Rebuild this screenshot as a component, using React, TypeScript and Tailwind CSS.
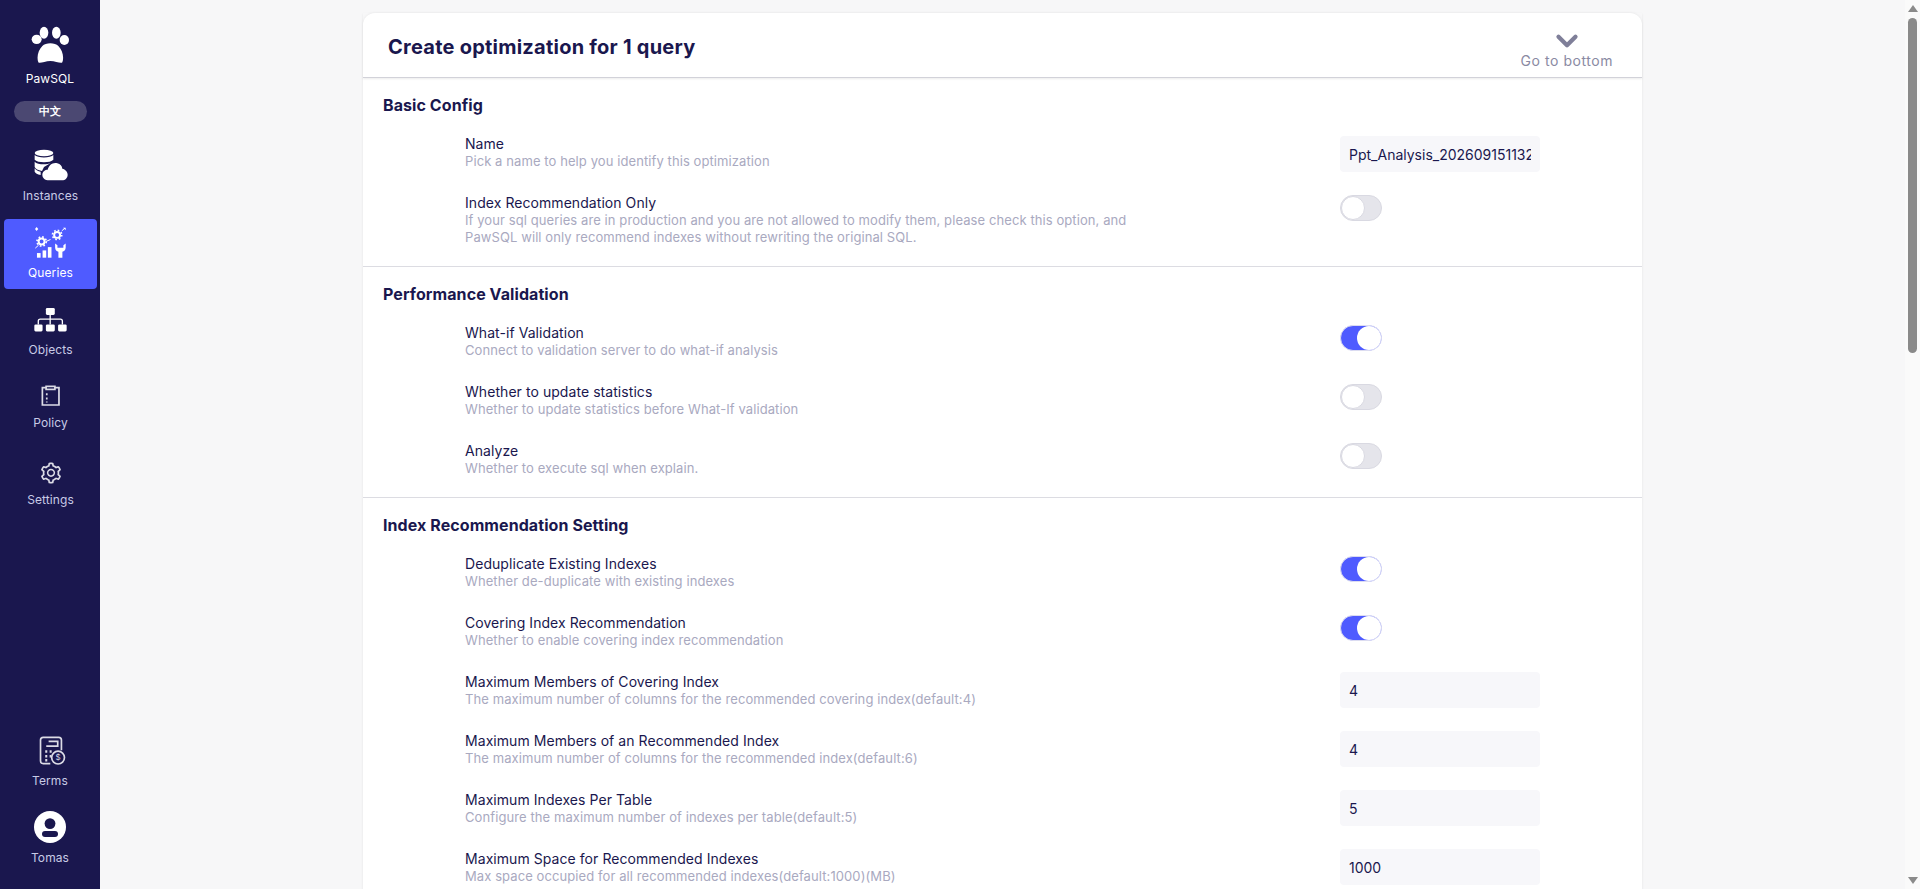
import { ChevronDown } from "lucide-react";
import { AiOutlineSetting } from "react-icons/ai";

type Row = {
  label: string;
  desc: string[];
  toggle?: boolean;
  value?: string;
  inputClass?: string;
};

const SECTIONS: { title: string; rows: Row[]; pb: string }[] = [
  {
    title: "Basic Config",
    pb: "pb-[20px]",
    rows: [
      { label: "Name", desc: ["Pick a name to help you identify this optimization"], value: "Ppt_Analysis_20260915113245", inputClass: "mt-[1px]" },
      {
        label: "Index Recommendation Only",
        desc: [
          "If your sql queries are in production and you are not allowed to modify them, please check this option, and",
          "PawSQL will only recommend indexes without rewriting the original SQL.",
        ],
        toggle: false,
      },
    ],
  },
  {
    title: "Performance Validation",
    pb: "pb-[17px]",
    rows: [
      { label: "What-if Validation", desc: ["Connect to validation server to do what-if analysis"], toggle: true },
      { label: "Whether to update statistics", desc: ["Whether to update statistics before What-If validation"], toggle: false },
      { label: "Analyze", desc: ["Whether to execute sql when explain."], toggle: false },
    ],
  },
  {
    title: "Index Recommendation Setting",
    pb: "pb-[18px]",
    rows: [
      { label: "Deduplicate Existing Indexes", desc: ["Whether de-duplicate with existing indexes"], toggle: true },
      { label: "Covering Index Recommendation", desc: ["Whether to enable covering index recommendation"], toggle: true },
      { label: "Maximum Members of Covering Index", desc: ["The maximum number of columns for the recommended covering index(default:4)"], value: "4", inputClass: "-mt-[1px]" },
      { label: "Maximum Members of an Recommended Index", desc: ["The maximum number of columns for the recommended index(default:6)"], value: "4", inputClass: "-mt-[1px]" },
      { label: "Maximum Indexes Per Table", desc: ["Configure the maximum number of indexes per table(default:5)"], value: "5", inputClass: "-mt-[1px]" },
      { label: "Maximum Space for Recommended Indexes", desc: ["Max space occupied for all recommended indexes(default:1000)(MB)"], value: "1000", inputClass: "-mt-[1px]" },
    ],
  },
];

function PawLogo() {
  return (
    <svg viewBox="96 75 114 114" className="h-[38px] w-[38px]" fill="#fff">
      <ellipse cx="113" cy="118" rx="15" ry="14" />
      <ellipse cx="135" cy="98" rx="13" ry="18" />
      <ellipse cx="172" cy="98" rx="13" ry="18" />
      <ellipse cx="196" cy="120" rx="14" ry="15" />
      <path d="M118 187C112 170 118 150 130 138C140 127 168 127 178 138C190 150 196 170 190 187C186 192 170 183 154 183C138 183 122 192 118 187Z" />
    </svg>
  );
}

function InstancesIcon() {
  return (
    <svg viewBox="100 446 102 96" className="h-[32px] w-[34px]" fill="#fff">
      <ellipse cx="130" cy="458" rx="28" ry="10" />
      <path d="M102 464C110 474 150 474 158 464V478C150 488 110 488 102 478Z" />
      <path d="M102 484C110 494 140 494 150 488L130 500L124 512C112 510 104 506 102 500Z" />
      <path d="M102 504C106 510 112 513 120 514V524C110 522 104 518 102 514Z" />
      <path
        d="M146 540C132 540 125 532 125 523C125 514 133 508 141 508C145 494 157 485 170 489C179 491 184 498 185 505C194 507 201 514 201 523C201 532 194 540 184 540Z"
        stroke="#1a174e"
        strokeWidth="3"
        paintOrder="stroke"
      />
    </svg>
  );
}

function QueriesIcon() {
  return (
    <svg viewBox="102 676 100 98" className="h-[33px] w-[33px]" fill="#fff">
      <path d="M110 678L115 684L110 690L105 684Z" />
      <path d="M106 742L116 733M138 722L152 716M186 690L196 681" stroke="#fff" strokeWidth="3" fill="none" />
      <path d="M190 680H198V688Z" />
      <circle cx="125" cy="722" r="9" fill="none" stroke="#fff" strokeWidth="6" />
      <circle cx="125" cy="722" r="14" fill="none" stroke="#fff" strokeWidth="5" strokeDasharray="5 6" />
      <circle cx="172" cy="702" r="9" fill="none" stroke="#fff" strokeWidth="6" />
      <circle cx="172" cy="702" r="14" fill="none" stroke="#fff" strokeWidth="5" strokeDasharray="5 6" />
      <rect x="111" y="757" width="11" height="14" />
      <rect x="128" y="749" width="11" height="22" />
      <rect x="144" y="739" width="11" height="32" />
      <path d="M166 728V740C166 748 171 752 176 753V771H188V753C193 752 198 748 198 740V728L191 733V741H173V733Z" />
    </svg>
  );
}

function ObjectsIcon() {
  return (
    <svg viewBox="102 18 100 74" className="h-[25px] w-[33px]" fill="#fff">
      <rect x="138" y="20" width="27" height="21" rx="4" />
      <rect x="103" y="70" width="25" height="21" rx="4" />
      <rect x="138" y="70" width="27" height="21" rx="4" />
      <rect x="175" y="70" width="26" height="21" rx="4" />
      <path d="M151 41V70M115 70V60Q115 54 121 54H182Q188 54 188 60V70" fill="none" stroke="#fff" strokeWidth="4" />
    </svg>
  );
}

function PolicyIcon() {
  return (
    <svg viewBox="125 256 56 62" className="h-[21px] w-[19px]" fill="none" stroke="#dcdce6">
      <path d="M140 264H129V315H178V264H166" strokeWidth="5" />
      <rect x="140" y="260" width="26" height="9" strokeWidth="5" />
      <path d="M142 280V286M142 293V299M142 305V308" strokeWidth="5" />
    </svg>
  );
}

function TermsIcon() {
  return (
    <svg viewBox="117 46 82 86" className="ml-[6px] h-[29px] w-[28px]" fill="none" stroke="#dcdce6" strokeWidth="5">
      <path d="M150 128H129Q121 128 121 120V58Q121 50 129 50H175Q183 50 183 58V88" />
      <path d="M145 62H172V76H138" />
      <circle cx="173" cy="110" r="19" />
      <text x="173" y="118" textAnchor="middle" fontSize="24" fontFamily="Inter" fill="#dcdce6" stroke="none">$</text>
      <path d="M135 92H141M148 92H154M135 106H141M148 106H152M135 118H141" strokeWidth="7" />
    </svg>
  );
}

function Avatar() {
  return (
    <svg viewBox="0 0 32 32" className="h-[32px] w-[32px]">
      <circle cx="16" cy="16" r="16" fill="#fff" />
      <circle cx="16" cy="12.6" r="5.4" fill="#1a174e" />
      <rect x="8" y="20" width="16" height="6" rx="3" fill="#1a174e" />
    </svg>
  );
}

function NavItem({ label, icon, active, className = "" }: { label: string; icon: React.ReactNode; active?: boolean; className?: string }) {
  return (
    <div
      className={`ml-[4px] flex h-[70px] w-[93px] flex-col items-center justify-end rounded-[4px] pb-[7px] ${
        active ? "bg-[#4f5bff] text-white" : "text-[#c8cbe6]"
      } ${className}`}
    >
      {icon}
      <span className="text-[12px] leading-[18px] tracking-[0.1px]">{label}</span>
    </div>
  );
}

function Sidebar() {
  return (
    <aside className="flex h-[889px] w-[100px] shrink-0 flex-col justify-between bg-[#1a174e] pt-[25px] pb-[22px]">
      <div>
        <div className="flex flex-col items-center">
          <PawLogo />
          <span className="mt-[7px] text-[12px] leading-[18px] tracking-[0.1px] text-white">PawSQL</span>
          <div className="mt-[13px] flex h-[21px] w-[73px] items-center justify-center rounded-full bg-[#4b4872] text-[11px] font-semibold text-white">
            中文
          </div>
        </div>
        <div className="mt-[20px] flex flex-col gap-[7px]">
          <NavItem label="Instances" icon={<div className="mb-[6px]"><InstancesIcon /></div>} />
          <NavItem label="Queries" active icon={<div className="mb-[5px]"><QueriesIcon /></div>} />
          <NavItem label="Objects" icon={<div className="mb-[9px]"><ObjectsIcon /></div>} />
          <NavItem label="Policy" className="-mt-[4px]" icon={<div className="mb-[8px]"><PolicyIcon /></div>} />
          <NavItem
            label="Settings"
            icon={
              <div className="mb-[6px] text-[#dcdce6]">
                <AiOutlineSetting size={24} />
              </div>
            }
          />
        </div>
      </div>
      <div className="flex flex-col items-center">
        <TermsIcon />
        <span className="mt-[7px] text-[12px] leading-[18px] tracking-[0.1px] text-[#c8cbe6]">Terms</span>
        <div className="mt-[21px]"><Avatar /></div>
        <span className="mt-[6px] text-[12px] leading-[18px] tracking-[0.1px] text-[#c8cbe6]">Tomas</span>
      </div>
    </aside>
  );
}

function Toggle({ on }: { on: boolean }) {
  return (
    <div
      className={`flex h-[26px] w-[42px] rounded-full border ${
        on ? "justify-end border-[#dcdcf0] bg-[#4f5bff]" : "justify-start border-[#d9d9e2] bg-[#e5e5eb]"
      }`}
    >
      <div className={`h-[24px] w-[24px] rounded-full bg-white ${on ? "" : "border border-[#d9d9e2]"}`} />
    </div>
  );
}

function SettingRow({ row }: { row: Row }) {
  return (
    <div className="flex min-h-[38px] pl-[102px]">
      <div className="w-[875px] shrink-0">
        <div className="text-[14px] leading-[18px] tracking-[0.06px] text-[#1a174e]">{row.label}</div>
        {row.desc.map((line) => (
          <div key={line} className="text-[13px] leading-[17px] tracking-[0.09px] text-[#a9a9bf]">
            {line}
          </div>
        ))}
      </div>
      {row.toggle !== undefined ? (
        <div className="pt-[1px]">
          <Toggle on={row.toggle} />
        </div>
      ) : (
        <input
          readOnly
          value={row.value}
          className={`h-[36px] w-[200px] rounded-[4px] bg-[#f7f7fa] px-[9px] text-[14px] text-[#1a174e] outline-none ${row.inputClass ?? ""}`}
        />
      )}
    </div>
  );
}

function Scrollbar() {
  return (
    <div className="flex h-[889px] w-[15px] shrink-0 flex-col items-center justify-between bg-[#fafafa] py-[5px]">
      <div className="h-0 w-0 border-x-[5px] border-b-[7px] border-x-transparent border-b-[#8a8a8a]" />
      <div className="mb-auto mt-[6px] h-[335px] w-[9px] rounded-full bg-[#8a8a8a]" />
      <div className="h-0 w-0 border-x-[5px] border-t-[7px] border-x-transparent border-t-[#8a8a8a]" />
    </div>
  );
}

export default function App() {
  return (
    <div className="flex h-[889px] overflow-hidden bg-[#f7f7f8] font-['Inter',sans-serif]">
      <Sidebar />
      <main className="min-w-0 flex-1 overflow-hidden pt-[13px]">
        <div className="mx-auto w-[1279px] rounded-t-[12px] bg-white shadow-[0_0_3px_rgba(0,0,0,0.08)]">
          <header className="flex h-[65px] items-center justify-between border-b border-[#d2d2d9] pl-[25px] pr-[29px] shadow-[0_1px_2px_rgba(0,0,0,0.08)]">
            <h1 className="mt-[3px] text-[20px] font-bold tracking-[0.24px] text-[#1a174e]">Create optimization for 1 query</h1>
            <div className="flex flex-col items-center pt-[10px] text-[#8a8aa3]">
              <ChevronDown size={34} strokeWidth={3} className="-mt-[6px] -mb-[8px] text-[#7f7f99]" />
              <span className="mt-[1px] text-[14px] leading-[20px] tracking-[0.55px]">Go to bottom</span>
            </div>
          </header>
          {SECTIONS.map((section, i) => (
            <section key={section.title} className={`${section.pb} ${i < SECTIONS.length - 1 ? "border-b border-[#dcdce2]" : ""}`}>
              <h2 className="px-[20px] pt-[15px] text-[16px] font-bold leading-[24px] tracking-[0.08px] text-[#1a174e]">{section.title}</h2>
              <div className="mt-[18px] flex flex-col gap-[21px]">
                {section.rows.map((row) => (
                  <SettingRow key={row.label} row={row} />
                ))}
              </div>
            </section>
          ))}
        </div>
      </main>
      <Scrollbar />
    </div>
  );
}
